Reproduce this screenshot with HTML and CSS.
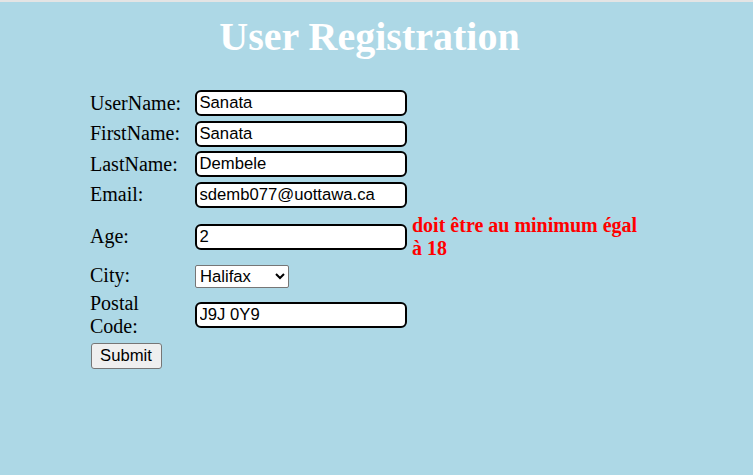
FILE: index.html
```html
<!DOCTYPE html>
<html lang="fr">
<head>
<meta charset="utf-8">
<title>User Registration</title>
<link rel="stylesheet" href="styles.css">
</head>
<body>
<div class="topline"></div>
<h1 class="title">User Registration</h1>
<form class="reg-form">
  <table class="reg-table">
    <tr>
      <td class="lbl">UserName:</td>
      <td class="fld"><input class="txt" type="text" value="Sanata"></td>
      <td class="err"></td>
    </tr>
    <tr>
      <td class="lbl">FirstName:</td>
      <td class="fld"><input class="txt" type="text" value="Sanata"></td>
      <td class="err"></td>
    </tr>
    <tr>
      <td class="lbl">LastName:</td>
      <td class="fld"><input class="txt" type="text" value="Dembele"></td>
      <td class="err"></td>
    </tr>
    <tr>
      <td class="lbl">Email:</td>
      <td class="fld"><input class="txt" type="text" value="sdemb077@uottawa.ca"></td>
      <td class="err"></td>
    </tr>
    <tr class="age-row">
      <td class="lbl">Age:</td>
      <td class="fld"><input class="txt" type="text" value="2"></td>
      <td class="err">doit être au minimum égal à 18</td>
    </tr>
    <tr>
      <td class="lbl">City:</td>
      <td class="fld">
        <select class="city">
          <option>Halifax</option>
          <option>Ottawa</option>
          <option>Toronto</option>
        </select>
      </td>
      <td class="err"></td>
    </tr>
    <tr>
      <td class="lbl">Postal Code:</td>
      <td class="fld"><input class="txt" type="text" value="J9J 0Y9"></td>
      <td class="err"></td>
    </tr>
  </table>
  <button class="submit" type="button">Submit</button>
</form>
</body>
</html>
```

FILE: styles.css
```css
html, body {
  margin: 0;
  padding: 0;
}

body {
  background: #add8e6;
  font-family: "Liberation Serif", "Times New Roman", serif;
  font-size: 20px;
  color: #000;
  height: 475px;
}

.topline {
  height: 2px;
  background: #e4e4e4;
}

.title {
  margin: 12px 14px 0 0;
  font-size: 40px;
  line-height: 46px;
  font-weight: bold;
  color: #fff;
  text-align: center;
}

.reg-form {
  margin: 27px 0 0 87px;
}

.reg-table {
  border-collapse: separate;
  border-spacing: 2.5px;
}

.reg-table td {
  padding: 1px;
  vertical-align: middle;
  line-height: 23px;
}

.reg-table td.lbl {
  width: 99px;
  padding-right: 3px;
}

.fld {
  width: 212px;
}

.reg-table td.err {
  width: 228px;
  padding-left: 2px;
  color: #ff0000;
  font-weight: bold;
}

.reg-table .age-row td {
  padding-top: 3px;
  padding-bottom: 0;
}

.reg-table .age-row td.fld {
  padding-top: 4px;
}

.txt {
  box-sizing: border-box;
  width: 212px;
  height: 26px;
  margin: 0;
  padding: 1px 2.5px;
  border: 2px solid #000;
  border-radius: 6px;
  background: #fff;
  font-family: "Liberation Sans", Arial, sans-serif;
  font-size: 16.67px;
  color: #000;
  vertical-align: middle;
}

.city {
  box-sizing: border-box;
  width: 94px;
  height: 23px;
  margin: 0;
  border: 1px solid #767676;
  border-radius: 2px;
  background: #fff;
  font-family: "Liberation Sans", Arial, sans-serif;
  font-size: 16.67px;
  color: #000;
  vertical-align: middle;
}

.submit {
  box-sizing: border-box;
  margin: 2px 0 0 3.5px;
  width: 71px;
  height: 26px;
  padding: 0 7px;
  border: 1px solid #767676;
  border-radius: 3px;
  background: #efefef;
  font-family: "Liberation Sans", Arial, sans-serif;
  font-size: 16.67px;
  color: #000;
}
```
